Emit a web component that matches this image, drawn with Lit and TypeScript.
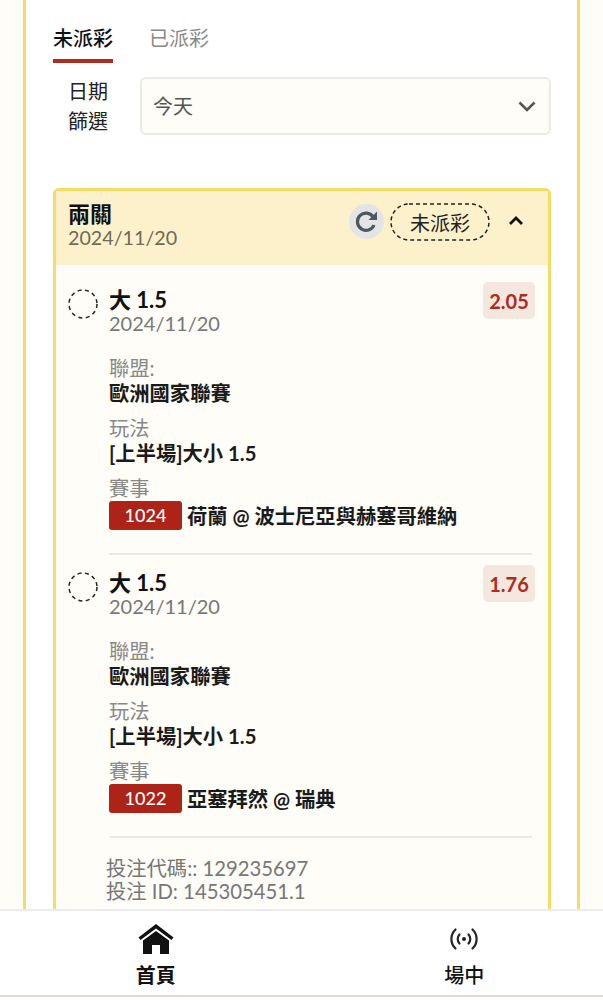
import { LitElement, html, css } from 'lit';
import { customElement } from 'lit/decorators.js';

interface Bet {
  odds: string;
  code: string;
  match: string;
}

const bets: Bet[] = [
  { odds: '2.05', code: '1024', match: '荷蘭 @ 波士尼亞與赫塞哥維納' },
  { odds: '1.76', code: '1022', match: '亞塞拜然 @ 瑞典' },
];

@customElement('app-root')
export class AppRoot extends LitElement {
  static styles = css`
    :host {
      display: block;
      height: 1000px;
      overflow: hidden;
      position: relative;
      background: #fefdf7;
      font-family: Lato, 'Noto Sans CJK TC', sans-serif;
      color: #111;
    }

    .page {
      margin: 0 23px;
      height: 910px;
      box-sizing: border-box;
      background: #fff;
      border: solid #f5dc66;
      border-width: 0 3px;
      padding: 0 26px 0 27px;
      overflow: hidden;
    }

    .tabs {
      display: flex;
      gap: 36px;
      padding-top: 25px;
      height: 38px;
    }

    .tab {
      font-size: 20px;
      line-height: 26px;
      height: 38px;
      color: #888;
      box-sizing: border-box;
    }

    .tab.active {
      color: #111;
      font-weight: 500;
      border-bottom: 4px solid #b02a20;
    }

    .filter {
      display: flex;
      align-items: center;
      margin-top: 13px;
    }

    .filter-label {
      width: 70px;
      flex: none;
      margin-right: 17px;
      text-align: center;
      font-size: 20px;
      line-height: 30px;
      color: #222;
    }

    .select {
      flex: 1;
      height: 58px;
      box-sizing: border-box;
      display: flex;
      align-items: center;
      justify-content: space-between;
      padding: 0 13px 0 11px;
      background: #fefdf7;
      border: 2px solid #ebebe3;
      border-radius: 6px;
      font-size: 20px;
      color: #555;
    }

    .select span {
      margin-bottom: 2px;
    }

    .card {
      margin-top: 52px;
      border: 3px solid #f5dc66;
      border-bottom: 0;
      border-radius: 6px 6px 0 0;
      background: #fefdf7;
    }

    .card-header {
      height: 74px;
      box-sizing: border-box;
      background: #fdf1cb;
      display: flex;
      align-items: flex-start;
      padding: 11px 11px 0 12px;
    }

    .card-title {
      flex: 1;
    }

    .card-name {
      font-size: 22px;
      line-height: 24px;
      font-weight: 700;
    }

    .card-date {
      font-size: 19.7px;
      line-height: 24px;
      color: #6f6a58;
    }

    .refresh {
      width: 35px;
      height: 35px;
      margin-top: 2px;
      border-radius: 50%;
      background: #e2e4e6;
      display: flex;
      align-items: center;
      justify-content: center;
    }

    .status {
      position: relative;
      width: 100px;
      height: 38px;
      margin-left: 6px;
      margin-top: 1px;
      display: flex;
      align-items: center;
      justify-content: center;
      font-size: 20px;
      color: #222;
    }

    .status svg {
      position: absolute;
      inset: 0;
    }

    .toggle {
      width: 14px;
      height: 35px;
      margin-top: 1px;
      margin-left: 19px;
      margin-right: 14px;
      display: flex;
      align-items: center;
      justify-content: center;
    }

    .bet-list {
      padding: 17px 16px 30px 12px;
    }

    .bet {
      display: flex;
      gap: 11px;
      height: 273px;
      box-sizing: border-box;
      margin-bottom: 10px;
    }

    .radio {
      width: 30px;
      height: 30px;
      flex: none;
      margin-top: 7px;
    }

    .bet-body {
      flex: 1;
      min-width: 0;
      height: 273px;
      box-sizing: border-box;
      border-bottom: 2px solid #ebebe3;
    }

    .bet-top {
      display: flex;
      justify-content: space-between;
      align-items: flex-start;
    }

    .bet-name {
      font-size: 22px;
      line-height: 23px;
      margin-top: 6px;
      font-weight: 700;
    }

    .bet-date {
      font-size: 20px;
      line-height: 24px;
      color: #777;
    }

    .odds {
      width: 52px;
      height: 37px;
      margin-right: -3px;
      border-radius: 5px;
      background: #f3e7df;
      color: #b02a20;
      font-size: 20px;
      font-weight: 700;
      display: flex;
      align-items: center;
      justify-content: center;
    }

    .field {
      margin-top: 11px;
    }

    .field.first {
      margin-top: 21px;
    }

    .field-label {
      font-size: 20.3px;
      line-height: 25px;
      color: #888;
    }

    .field-value {
      font-size: 20.3px;
      line-height: 24px;
      font-weight: 700;
      color: #1a1a1a;
    }

    .match {
      display: flex;
      align-items: center;
      gap: 5px;
      margin-top: -1px;
      font-size: 20.3px;
      font-weight: 700;
      color: #1a1a1a;
    }

    .code {
      width: 73px;
      height: 29px;
      border-radius: 3px;
      background: #ad2318;
      color: #fff;
      font-size: 18px;
      font-weight: 500;
      display: flex;
      align-items: center;
      justify-content: center;
    }

    .bet-ids {
      margin-top: 19px;
      padding-left: 38px;
      font-size: 20.3px;
      line-height: 23px;
      color: #777;
    }

    nav {
      position: absolute;
      left: 0;
      right: 0;
      top: 909px;
      height: 88px;
      box-sizing: border-box;
      background: #fff;
      border-top: 2px solid #ececec;
      border-bottom: 2px solid #dcdcdc;
      display: grid;
      grid-template-columns: 1fr 1fr;
    }

    .nav-item {
      display: flex;
      flex-direction: column;
      align-items: center;
      padding-top: 11px;
      font-size: 20px;
      font-weight: 700;
      line-height: 26px;
      gap: 7px;
    }

    .nav-item.left {
      transform: translateX(5px);
    }

    .nav-item.right {
      font-weight: 500;
      transform: translateX(12px);
    }

    .nav-icon {
      height: 33px;
      display: flex;
      align-items: center;
      justify-content: center;
    }
  `;

  renderBet(bet: Bet) {
    return html`
      <div class="bet">
        <svg class="radio" viewBox="0 0 30 30" fill="none" stroke="#222" stroke-width="1.5" stroke-dasharray="4 3.5">
          <circle cx="15" cy="15" r="14" />
        </svg>
        <div class="bet-body">
          <div class="bet-top">
            <div>
              <div class="bet-name">大 1.5</div>
              <div class="bet-date">2024/11/20</div>
            </div>
            <div class="odds">${bet.odds}</div>
          </div>
          <div class="field first">
            <div class="field-label">聯盟:</div>
            <div class="field-value">歐洲國家聯賽</div>
          </div>
          <div class="field">
            <div class="field-label">玩法</div>
            <div class="field-value">[上半場]大小 1.5</div>
          </div>
          <div class="field">
            <div class="field-label">賽事</div>
            <div class="match">
              <span class="code">${bet.code}</span>
              <span>${bet.match}</span>
            </div>
          </div>
        </div>
      </div>
    `;
  }

  render() {
    return html`
      <div class="page">
        <div class="tabs">
          <div class="tab active">未派彩</div>
          <div class="tab">已派彩</div>
        </div>
        <div class="filter">
          <div class="filter-label">日期<br />篩選</div>
          <div class="select">
            <span>今天</span>
            <svg width="18" height="11" viewBox="0 0 18 11" fill="none" stroke="#555" stroke-width="2.6">
              <path d="M1.5 1.5 9 9l7.5-7.5" />
            </svg>
          </div>
        </div>
        <div class="card">
          <div class="card-header">
            <div class="card-title">
              <div class="card-name">兩關</div>
              <div class="card-date">2024/11/20</div>
            </div>
            <div class="refresh">
              <svg width="25" height="25" viewBox="0 0 25 25" fill="none">
                <path d="M20 16a8.6 8.6 0 1 1-.9-8.2" stroke="#4f5660" stroke-width="3.2" />
                <path d="M23 2.500V11h-8.500z" fill="#4f5660" />
              </svg>
            </div>
            <div class="status">
              <svg width="100" height="38" viewBox="0 0 100 38" fill="none" stroke="#222" stroke-width="1.5" stroke-dasharray="4 3">
                <rect x="1" y="1" width="98" height="36" rx="18" />
              </svg>
              未派彩
            </div>
            <div class="toggle">
              <svg width="14" height="9" viewBox="0 0 14 9" fill="none" stroke="#111" stroke-width="2.8">
                <path d="M1 8 7 2l6 6" />
              </svg>
            </div>
          </div>
          <div class="bet-list">
            ${bets.map((b) => this.renderBet(b))}
            <div class="bet-ids">
              <div>投注代碼:: 129235697</div>
              <div>投注 ID: 145305451.1</div>
            </div>
          </div>
        </div>
      </div>
      <nav>
        <div class="nav-item left">
          <div class="nav-icon">
            <svg width="36" height="32" viewBox="0 0 36 32">
              <path d="M18 1 0.500 14.500 2.500 17 18 5.500 33.500 17 35.500 14.500z" fill="#111" />
              <path d="M5 17.500 18 8l13 9.500V31H22v-9h-8v9H5z" fill="#111" />
            </svg>
          </div>
          <span>首頁</span>
        </div>
        <div class="nav-item right">
          <div class="nav-icon">
            <svg width="28" height="24" viewBox="0 0 28 24" fill="none" stroke="#222" stroke-width="2.2" stroke-linecap="round">
              <circle cx="14" cy="12" r="2" fill="#222" stroke="none" />
              <path d="M9.500 7.500a6.500 6.500 0 0 0 0 9M18.500 7.500a6.500 6.500 0 0 1 0 9" />
              <path d="M5.500 2.500a13 13 0 0 0 0 19M22.500 2.500a13 13 0 0 1 0 19" />
            </svg>
          </div>
          <span>場中</span>
        </div>
      </nav>
    `;
  }
}
